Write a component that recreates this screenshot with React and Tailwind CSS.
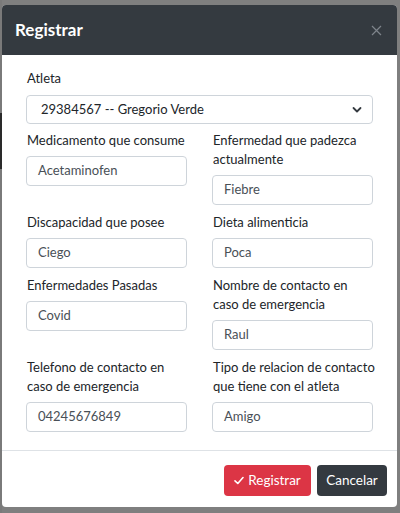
import React from "react";

const font = { fontFamily: 'Lato, "Noto Sans", sans-serif' };

function Field({ label, value }) {
  return (
    <div className="flex flex-col">
      <label className="text-[13px] leading-[19px] text-[#212529] mb-[6px] whitespace-nowrap pl-[1px]">{label}</label>
      <div className="h-[30px] border border-[#ced4da] rounded-[4px] bg-white flex items-center pl-[11px] text-[13px] text-[#495057]">
        {value}
      </div>
    </div>
  );
}

export default function App() {
  return (
    <div className="w-[400px] h-[513px] bg-[#7f7f7f] flex overflow-hidden" style={font}>
      <div className="w-[2px] flex flex-col shrink-0">
        <div className="h-[113px] bg-[#7a7a7a]" />
        <div className="h-[56px] bg-[#2a2a2a]" />
        <div className="flex-1 bg-[#7a7a7a]" />
      </div>
      <div className="pt-[5px]">
        <div className="w-[395px] bg-white rounded-[4px] overflow-hidden flex flex-col">
          <div className="h-[50px] bg-[#343a40] flex items-center justify-between pl-[13px] pr-[15px]">
            <span className="text-white font-bold text-[17px]">Registrar</span>
            <svg width="11" height="11" viewBox="0 0 11 11">
              <path d="M1 1 L10 10 M10 1 L1 10" stroke="#7e848b" strokeWidth="1.2" fill="none" />
            </svg>
          </div>
          <div className="px-[24px] pt-[14px] pb-[18px]">
            <label className="block text-[13px] leading-[19px] text-[#212529] mb-[7px] pl-[1px]">Atleta</label>
            <div className="h-[29px] border border-[#ced4da] rounded-[4px] flex items-center justify-between pl-[14px] pr-[10px] text-[13px] text-[#212529]">
              <span>29384567 -- Gregorio Verde</span>
              <svg width="10" height="8" viewBox="0 0 10 8">
                <path d="M1.5 2 L5 5.5 L8.5 2" stroke="#343a40" strokeWidth="1.8" fill="none" strokeLinecap="round" strokeLinejoin="round" />
              </svg>
            </div>
            <div className="grid grid-cols-2 gap-x-[25px] gap-y-[8px] mt-[7px] items-start">
              <Field label="Medicamento que consume" value="Acetaminofen" />
              <Field label={<>Enfermedad que padezca<br />actualmente</>} value="Fiebre" />
              <Field label="Discapacidad que posee" value="Ciego" />
              <Field label="Dieta alimenticia" value="Poca" />
              <Field label="Enfermedades Pasadas" value="Covid" />
              <Field label={<>Nombre de contacto en<br />caso de emergencia</>} value="Raul" />
              <Field label={<>Telefono de contacto en<br />caso de emergencia</>} value="04245676849" />
              <Field label={<>Tipo de relacion de contacto<br />que tiene con el atleta</>} value="Amigo" />
            </div>
          </div>
          <div className="border-t border-[#dee2e6] flex justify-end gap-[6px] pt-[14px] pb-[11px] pr-[10px]">
            <button className="w-[87px] h-[31px] bg-[#dc3545] text-white rounded-[4px] text-[13.5px] flex items-center justify-center gap-[4px]">
              <svg width="10" height="9" viewBox="0 0 10 9">
                <path d="M1 4.8 L3.8 7.5 L9 1.5" stroke="white" strokeWidth="1.6" fill="none" strokeLinecap="round" strokeLinejoin="round" />
              </svg>
              <span>Registrar</span>
            </button>
            <button className="w-[70px] h-[31px] bg-[#343a40] text-white rounded-[4px] text-[13.5px]">Cancelar</button>
          </div>
        </div>
      </div>
    </div>
  );
}
